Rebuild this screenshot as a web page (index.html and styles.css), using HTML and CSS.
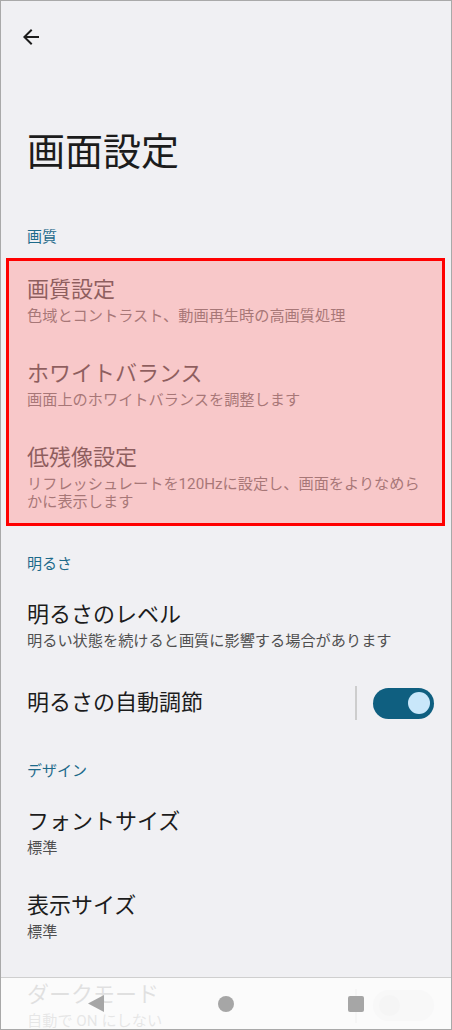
FILE: index.html
```html
<!DOCTYPE html>
<html lang="ja">
<head>
    <meta charset="UTF-8">
    <meta name="viewport" content="width=device-width, initial-scale=1.0">
    <title>画面設定</title>
    <link rel="stylesheet" href="styles.css">
</head>
<body>
<div class="screen">
    <div class="appbar">
        <svg class="back" viewBox="0 0 24 24" width="24" height="24">
            <path d="M20 11H7.83l5.59-5.59L12 4l-8 8 8 8 1.41-1.41L7.83 13H20v-2z"/>
        </svg>
    </div>
    <h1 class="page-title">画面設定</h1>

    <div class="category">画質</div>
    <div class="marked">
        <div class="pref">
            <div class="pref-title">画質設定</div>
            <div class="pref-sum">色域とコントラスト、動画再生時の高画質処理</div>
        </div>
        <div class="pref">
            <div class="pref-title">ホワイトバランス</div>
            <div class="pref-sum">画面上のホワイトバランスを調整します</div>
        </div>
        <div class="pref">
            <div class="pref-title">低残像設定</div>
            <div class="pref-sum">リフレッシュレートを120Hzに設定し、画面をよりなめらかに表示します</div>
        </div>
    </div>

    <div class="category">明るさ</div>
    <div class="pref">
        <div class="pref-title">明るさのレベル</div>
        <div class="pref-sum">明るい状態を続けると画質に影響する場合があります</div>
    </div>
    <div class="pref pref-switch auto">
        <div class="pref-text">
            <div class="pref-title">明るさの自動調節</div>
        </div>
        <span class="divider"></span>
        <span class="switch on"><span class="thumb"></span></span>
    </div>

    <div class="category">デザイン</div>
    <div class="pref">
        <div class="pref-title">フォントサイズ</div>
        <div class="pref-sum">標準</div>
    </div>
    <div class="pref">
        <div class="pref-title">表示サイズ</div>
        <div class="pref-sum">標準</div>
    </div>
    <div class="pref pref-switch dark">
        <div class="pref-text">
            <div class="pref-title">ダークモード</div>
            <div class="pref-sum">自動で ON にしない</div>
        </div>
        <span class="divider"></span>
        <span class="switch"><span class="thumb"></span></span>
    </div>

    <div class="navbar">
        <svg class="nav-back" viewBox="0 0 16 17" width="16" height="17">
            <polygon points="16,0 16,17 0,8.5"/>
        </svg>
        <span class="nav-home"></span>
        <span class="nav-recent"></span>
    </div>
</div>
</body>
</html>
```

FILE: styles.css
```css
body {
    margin: 0;
    background-color: #ffffff;
    font-family: Roboto, "Noto Sans CJK JP", sans-serif;
}
.screen {
    position: relative;
    box-sizing: border-box;
    width: 452px;
    height: 1030px;
    overflow: hidden;
    border: 1px solid #a9a9a9;
    background-color: #f0f0f3;
    color: #1c1c1c;
}
.appbar {
    box-sizing: border-box;
    height: 73px;
    padding: 24px 0 0 18px;
}
.back {
    display: block;
    fill: #1c1c1c;
}
.page-title {
    margin: 0;
    padding: 53px 26px 24px;
    font-size: 38px;
    line-height: 50px;
    font-weight: 400;
}
.category {
    padding: 26px 16px 9px 26px;
    font-size: 15px;
    line-height: 20px;
    color: #1d6a8a;
}
.pref {
    padding: 18px 24px 17px 26px;
}
.pref-title {
    font-size: 22px;
    line-height: 28px;
}
.pref-sum {
    margin-top: 3px;
    font-size: 15.2px;
    line-height: 18px;
    color: #4f4f4f;
}
.marked {
    position: relative;
    padding-top: 2px;
}
.marked::after {
    content: "";
    position: absolute;
    top: 2px;
    left: 5px;
    right: 6px;
    bottom: 2px;
    border: 3px solid #ff0000;
    background-color: rgba(255, 160, 160, 0.5);
}
.pref-switch {
    display: flex;
    align-items: center;
    padding-right: 17px;
}
.pref-switch.auto {
    box-sizing: border-box;
    min-height: 68px;
    padding-top: 4px;
    padding-bottom: 0;
}
.pref-switch.dark {
    padding-top: 23px;
}
.pref-text {
    flex: 1;
}
.divider {
    width: 2px;
    height: 34px;
    margin-right: 16px;
    background-color: #cdcdcd;
}
.switch {
    position: relative;
    width: 61px;
    height: 31px;
    border-radius: 16px;
    background-color: #d9d9dc;
}
.switch .thumb {
    position: absolute;
    top: 5px;
    left: 6px;
    width: 21px;
    height: 21px;
    border-radius: 50%;
    background-color: #c4c4c6;
}
.switch.on {
    background-color: #0f5f80;
}
.switch.on .thumb {
    top: 4px;
    left: auto;
    right: 4px;
    width: 22px;
    height: 22px;
    background-color: #c9e7fa;
}
.navbar {
    position: absolute;
    left: 0;
    right: 0;
    bottom: 0;
    height: 51px;
    border-top: 1px solid #cfcfcf;
    background-color: rgba(252, 252, 252, 0.88);
    display: grid;
    grid-template-columns: repeat(3, 130px);
    justify-content: center;
    justify-items: center;
    align-items: center;
}
.nav-back {
    fill: #a6a6a6;
}
.nav-home {
    width: 16px;
    height: 16px;
    border-radius: 50%;
    background-color: #a6a6a6;
}
.nav-recent {
    width: 16px;
    height: 16px;
    border-radius: 2px;
    background-color: #a6a6a6;
}
```
